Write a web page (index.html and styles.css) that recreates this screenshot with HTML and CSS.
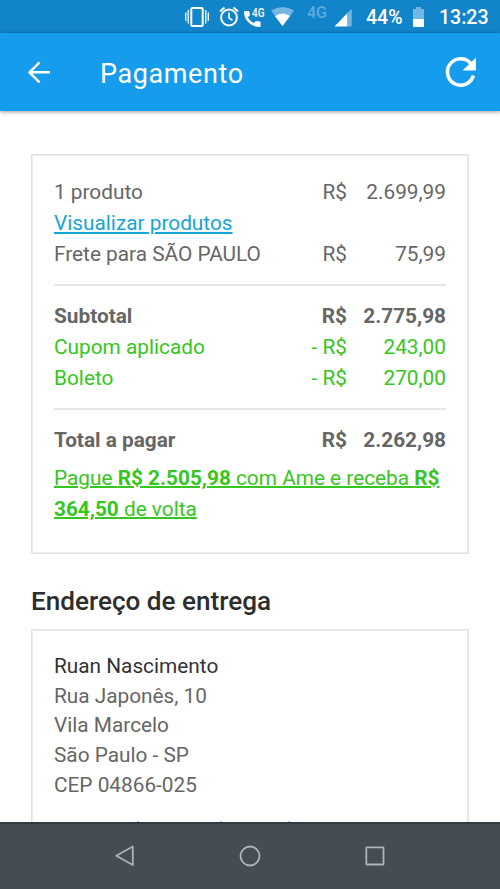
FILE: index.html
```html
<!DOCTYPE html>
<html lang="pt-BR">
<head>
<meta charset="utf-8">
<meta name="viewport" content="width=device-width">
<title>Pagamento</title>
<link rel="stylesheet" href="styles.css">
</head>
<body>
<div class="screen">
  <div class="status">
    <svg class="status-icons" width="180" height="33" viewBox="0 0 180 33">
      <g fill="none" stroke="#fff">
        <rect x="11.300" y="8" width="11.400" height="18" rx="1" stroke-width="2"/>
        <path d="M8.200 10v13.500M5.700 12.500v8.500M25.800 10v13.500M28.300 12.500v8.500" stroke-width="1.300"/>
        <circle cx="49" cy="17.500" r="7.900" stroke-width="2"/>
        <path d="M49 12.500v5.500l3.500 2.300" stroke-width="1.600"/>
        <path d="M40 11.500l4.500-4M58 11.500l-4.500-4" stroke-width="2"/>
      </g>
      <path fill="#fff" d="M65 11h3.500q.8 0 .9.900l.6 3.300-2.200 2.100q2.200 3.900 6 5.700l2-2.100 3.800.6q1 .2 1 1v3.400q0 1-1 1C71 27 64 20 64 12q0-1 1-1z"/>
      <path fill="#73b8e4" d="M91 10.500Q102.500 3.500 114 10.500L102.500 26z"/>
      <path fill="#fff" d="M95 16Q102.500 11 110 16L102.500 26z"/>
      <path fill="#73b8e4" d="M167.200 26.500V13.300L171.700 9v17.500z"/>
      <path fill="#fff" d="M154.500 26.500L167.200 13.300v13.200z"/>
      <text class="call-net" x="72" y="17" textLength="12.500" lengthAdjust="spacingAndGlyphs">4G</text>
      <text class="mobile-net" x="127" y="18">4G</text>
    </svg>
    <span class="percent">44%</span>
    <svg class="battery" width="14" height="33" viewBox="0 0 14 33"><path fill="#73b8e4" d="M1 9h3V7h5v2h3v11H1z"/><path fill="#fff" d="M1 19h11v8H1z"/></svg>
    <span class="time">13:23</span>
  </div>
  <header class="bar">
    <svg class="back" width="24" height="24" viewBox="0 0 24 24"><path d="M23 12.300H2.500M12.500 2.300l-10 10 10 10" fill="none" stroke="#fff" stroke-width="2.500" stroke-linejoin="round"/></svg>
    <h1 class="title">Pagamento</h1>
    <svg class="reload" width="34" height="34" viewBox="0 0 34 34"><path d="M29.400 20.500A13.200 13.200 0 1 1 26.800 8.500" fill="none" stroke="#fff" stroke-width="3.600"/><path d="M32 2.500v13H18.500z" fill="#fff"/></svg>
  </header>
  <main class="content">
    <section class="card summary">
      <div class="row"><span>1 produto</span><span class="cur">R$</span><span class="val">2.699,99</span></div>
      <div class="row"><a class="link">Visualizar produtos</a></div>
      <div class="row"><span>Frete para SÃO PAULO</span><span class="cur">R$</span><span class="val">75,99</span></div>
      <hr class="rule">
      <div class="row strong"><span>Subtotal</span><span class="cur">R$</span><span class="val">2.775,98</span></div>
      <div class="row green"><span>Cupom aplicado</span><span class="cur">- R$</span><span class="val">243,00</span></div>
      <div class="row green"><span>Boleto</span><span class="cur">- R$</span><span class="val">270,00</span></div>
      <hr class="rule">
      <div class="row strong"><span>Total a pagar</span><span class="cur">R$</span><span class="val">2.262,98</span></div>
      <p class="ame">Pague <b>R$ 2.505,98</b> com Ame e receba <b>R$ 364,50</b> de volta</p>
    </section>
    <h2 class="heading">Endereço de entrega</h2>
    <section class="card address">
      <p class="name">Ruan Nascimento</p>
      <p>Rua Japonês, 10</p>
      <p>Vila Marcelo</p>
      <p>São Paulo - SP</p>
      <p>CEP 04866-025</p>
      <svg class="peek" width="250" height="2" viewBox="0 0 250 2"><path d="M83 0h2v2h-2zM166 0h2v2h-2zM234 0h2v2h-2z"/></svg>
    </section>
  </main>
  <nav class="nav">
    <svg width="24" height="24" viewBox="0 0 24 24"><path d="M19.800 2.500v18.500L3.300 11.800z"/></svg>
    <svg width="24" height="24" viewBox="0 0 24 24"><circle cx="12" cy="12" r="9.500"/></svg>
    <svg width="24" height="24" viewBox="0 0 24 24"><rect x="3.300" y="3.300" width="17.200" height="17.200" rx=".5"/></svg>
  </nav>
</div>
</body>
</html>
```
FILE: styles.css
```css
* { box-sizing: border-box; }
body { margin: 0; font-family: Roboto, sans-serif; background: #fff; }
h1, h2, p { margin: 0; }
.screen { width: 500px; height: 889px; display: flex; flex-direction: column; overflow: hidden; }
.status { height: 33px; flex: none; background: #1284c9; color: #fff; display: flex; align-items: center; padding-left: 180px; font-size: 19.5px; font-weight: 500; white-space: nowrap; }
.status-icons, .battery { flex: none; }
.call-net { font-size: 13px; fill: #fff; }
.mobile-net { font-size: 16px; fill: #5babdd; }
.percent { width: 37px; margin-left: 6px; margin-top: 2px; }
.battery { margin-left: 9px; }
.time { margin-left: 13px; margin-top: 2px; }
.bar { height: 78px; flex: none; background: #159cec; display: flex; align-items: center; padding: 0 22px 0 27px; box-shadow: 0 1px 4px rgba(0,0,0,.4); position: relative; }
.title { margin-left: 49px; margin-top: 4px; color: #fff; font-size: 27px; font-weight: 400; letter-spacing: .6px; }
.reload { margin-left: auto; }
.content { flex: 1; min-height: 0; overflow: hidden; padding: 43px 31px 0; color: #666; font-size: 20.8px; }
.card { border: 1px solid #e2e2e2; box-shadow: inset 0 0 0 1px #ececec; padding: 0 22px; }
.summary { height: 400px; padding-top: 22px; }
.row { height: 31px; line-height: 31px; display: grid; grid-template-columns: 1fr 50px 99px; white-space: nowrap; }
.cur, .val { text-align: right; }
.link { color: #15a5d8; text-decoration: underline; }
.strong { font-weight: 700; }
.green, .ame { color: #36c620; }
.rule { margin: 14px 0 15px; border: 0; height: 2px; background: #e6e6e6; }
.ame { margin-top: 7px; line-height: 31px; text-decoration: underline; text-decoration-thickness: 1.5px; }
.heading { margin-top: 30px; height: 34px; line-height: 34px; color: #2d2d2d; font-size: 26.1px; font-weight: 500; }
.address { height: 300px; margin-top: 11px; padding-top: 22px; line-height: 29.7px; }
.name { color: #333; }
.peek { display: block; margin-top: 20.5px; fill: #8fc9d6; }
.nav { height: 67px; flex: none; background: #454d53; border-top: 2px solid #343b40; display: flex; justify-content: center; align-items: center; gap: 101px; padding-bottom: 2px; }
.nav svg { fill: none; stroke: #adb3b8; stroke-width: 1.8; stroke-linejoin: round; }
```
